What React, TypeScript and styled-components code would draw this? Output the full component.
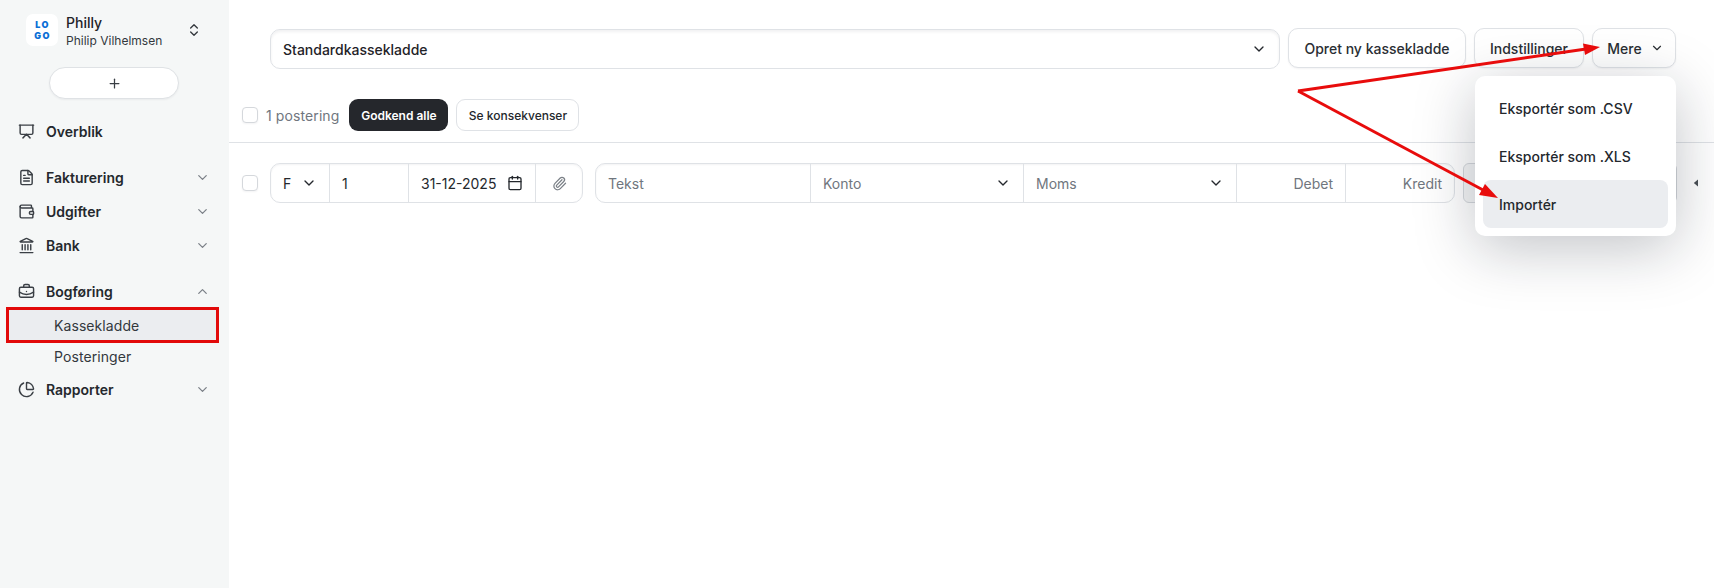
import React from "react";
import styled, { createGlobalStyle } from "styled-components";
import {
  BriefcaseBusiness,
  Calendar,
  ChartPie,
  ChevronDown,
  ChevronUp,
  ChevronsUpDown,
  FileText,
  Landmark,
  Paperclip,
  Plus,
  Presentation,
  Wallet,
} from "lucide-react";

const Global = createGlobalStyle`
  html, body { margin: 0; padding: 0; background: #fff; }
  body { font-family: Inter, "Liberation Sans", sans-serif; color: #1f2328; }
  * { box-sizing: border-box; }
`;

const Page = styled.div`
  position: relative;
  display: flex;
  width: 1714px;
  height: 588px;
  overflow: hidden;
`;

const Sidebar = styled.aside`
  width: 229px;
  flex: none;
  background: #f5f7f7;
  display: flex;
  flex-direction: column;
`;

const Brand = styled.div`
  display: flex;
  align-items: center;
  margin: 14px 0 0 26px;
  height: 32px;
`;

const LogoTile = styled.div`
  width: 32px;
  height: 32px;
  border-radius: 7px;
  background: #fff;
  display: flex;
  flex-direction: column;
  align-items: center;
  justify-content: center;
  color: #0b6fd6;
  font-size: 9px;
  font-weight: 900;
  line-height: 11px;
  letter-spacing: 1.4px;
  padding-left: 1px;
`;

const BrandText = styled.div`
  margin-left: 8px;
  padding-top: 2px;
  width: 120px;
  display: flex;
  flex-direction: column;
`;

const BrandName = styled.div`
  font-size: 14px;
  line-height: 18px;
  font-weight: 500;
`;

const BrandUser = styled.div`
  font-size: 12px;
  line-height: 17px;
  color: #33383d;
`;

const BrandToggle = styled.div`
  display: flex;
  color: #33383d;
`;

const AddButton = styled.div`
  margin: 21px 0 0 49px;
  width: 130px;
  height: 32px;
  border-radius: 16px;
  border: 1px solid #dfe2e5;
  background: #fff;
  display: flex;
  align-items: center;
  justify-content: center;
  color: #3a3f45;
  box-shadow: 0 1px 2px rgba(16, 24, 40, 0.05);
`;

const NavGroup = styled.nav<{ $top: number }>`
  margin-top: ${(p) => p.$top}px;
  display: flex;
  flex-direction: column;
`;

const NavRow = styled.div`
  height: 34px;
  padding: 0 18px 0 18px;
  display: flex;
  align-items: center;
  font-size: 14px;
  font-weight: 600;
  color: #24282d;
  svg.lead { width: 17px; height: 17px; color: #3a3f45; margin-right: 11px; flex: none; }
  svg.tail { width: 15px; height: 15px; color: #7b8087; margin-left: auto; margin-right: 1px; }
`;

const SubRow = styled.div<{ $active?: boolean }>`
  margin: ${(p) => (p.$active ? "2px 13px 1px 9px" : "0 13px 0 9px")};
  height: ${(p) => (p.$active ? "30px" : "31px")};
  padding-left: 45px;
  display: flex;
  align-items: center;
  font-size: 14px;
  letter-spacing: 0.08px;
  color: #33383d;
  background: ${(p) => (p.$active ? "#ebedf0" : "transparent")};
  outline: ${(p) => (p.$active ? "3px solid #e20a0a" : "none")};
`;

const Main = styled.main`
  flex: 1;
  min-width: 0;
  display: flex;
  flex-direction: column;
`;

const TopBar = styled.div`
  display: flex;
  align-items: flex-start;
  padding: 28px 38px 0 41px;
  gap: 8px;
`;

const JournalSelect = styled.div`
  flex: 1;
  height: 40px;
  margin-top: 1px;
  border: 1px solid #dfe2e6;
  border-radius: 10px;
  padding: 0 12px;
  display: flex;
  align-items: center;
  justify-content: space-between;
  font-size: 14px;
  font-weight: 500;
  box-shadow: inset 0 2px 3px rgba(16, 24, 40, 0.06);
  svg { width: 16px; height: 16px; color: #24282d; }
`;

const Button = styled.div<{ $w: number; $iconed?: boolean }>`
  width: ${(p) => p.$w}px;
  flex: none;
  height: 40px;
  padding-left: ${(p) => (p.$iconed ? "3px" : "0")};
  border: 1px solid #dfe2e6;
  border-radius: 10px;
  background: #fff;
  display: flex;
  align-items: center;
  justify-content: center;
  gap: 8px;
  font-size: 14px;
  font-weight: 500;
  color: #2a2e33;
  box-shadow: 0 1px 2px rgba(16, 24, 40, 0.05);
  svg { width: 14px; height: 14px; }
`;

const ActionRow = styled.div`
  display: flex;
  align-items: center;
  height: 74px;
  padding: 19px 0 0 13px;
  border-bottom: 1px solid #dfe2e6;
`;

const Check = styled.span`
  width: 16px;
  height: 16px;
  flex: none;
  border: 1px solid #d5d8dc;
  border-radius: 4px;
  background: #fff;
  box-shadow: 0 1px 2px rgba(16, 24, 40, 0.05);
`;

const CountLabel = styled.span`
  margin: 0 2px 0 8px;
  font-size: 14px;
  letter-spacing: 0.1px;
  color: #70767e;
`;

const DarkButton = styled.div`
  margin-left: 8px;
  width: 99px;
  height: 32px;
  border-radius: 9px;
  background: #25272c;
  color: #fff;
  font-size: 12px;
  font-weight: 600;
  display: flex;
  align-items: center;
  justify-content: center;
`;

const LightButton = styled.div`
  margin-left: 8px;
  width: 123px;
  height: 32px;
  border-radius: 9px;
  background: #fff;
  border: 1px solid #dfe2e6;
  color: #24282d;
  font-size: 12px;
  font-weight: 500;
  display: flex;
  align-items: center;
  justify-content: center;
`;

const EntryRow = styled.div`
  display: flex;
  align-items: center;
  padding: 20px 0 0 13px;
`;

const FieldGroup = styled.div<{ $ml: number }>`
  margin-left: ${(p) => p.$ml}px;
  height: 40px;
  display: flex;
  flex: none;
  border: 1px solid #dfe2e6;
  border-radius: 10px;
  overflow: hidden;
  box-shadow: inset 0 1px 2px rgba(16, 24, 40, 0.05);
`;

const Field = styled.div<{ $w: number; $right?: boolean; $muted?: boolean; $center?: boolean }>`
  width: ${(p) => p.$w}px;
  flex: none;
  height: 100%;
  padding: 0 12px;
  display: flex;
  align-items: center;
  justify-content: ${(p) => (p.$right ? "flex-end" : p.$center ? "center" : "space-between")};
  font-size: 14px;
  color: ${(p) => (p.$muted ? "#70767e" : "#24282d")};
  border-right: 1px solid #dfe2e6;
  &:last-child { border-right: none; }
  svg { width: 16px; height: 16px; flex: none; color: #24282d; }
`;

const ClipIcon = styled(Paperclip)`
  && { color: #7b8087; width: 15px; height: 15px; }
`;

const GhostBox = styled.div`
  margin-left: 8px;
  width: 214px;
  height: 40px;
  flex: none;
  border: 1px solid #d5d8dc;
  border-radius: 6px;
  background: #f5f6f7;
`;

const Caret = styled.svg`
  margin-left: 16px;
  flex: none;
`;

const Menu = styled.div`
  position: absolute;
  left: 1475px;
  top: 76px;
  width: 201px;
  height: 160px;
  padding: 8px;
  background: #fff;
  border-radius: 10px;
  box-shadow: 0 12px 60px rgba(16, 24, 40, 0.26);
  display: flex;
  flex-direction: column;
`;

const MenuItem = styled.div<{ $active?: boolean }>`
  height: 48px;
  flex: none;
  padding-left: 16px;
  display: flex;
  align-items: center;
  font-size: 14px;
  font-weight: 500;
  color: #24282d;
  border-radius: 8px;
  background: ${(p) => (p.$active ? "#ebedf0" : "transparent")};
`;

const Arrows = styled.svg`
  position: absolute;
  inset: 0;
  pointer-events: none;
`;

export default function App() {
  return (
    <Page>
      <Global />
      <Sidebar>
        <Brand>
          <LogoTile>
            <span>LO</span>
            <span>GO</span>
          </LogoTile>
          <BrandText>
            <BrandName>Philly</BrandName>
            <BrandUser>Philip Vilhelmsen</BrandUser>
          </BrandText>
          <BrandToggle>
            <ChevronsUpDown size={16} />
          </BrandToggle>
        </Brand>
        <AddButton>
          <Plus size={15} />
        </AddButton>
        <NavGroup $top={15}>
          <NavRow>
            <Presentation className="lead" />
            Overblik
          </NavRow>
        </NavGroup>
        <NavGroup $top={12}>
          <NavRow>
            <FileText className="lead" />
            Fakturering
            <ChevronDown className="tail" />
          </NavRow>
          <NavRow>
            <Wallet className="lead" />
            Udgifter
            <ChevronDown className="tail" />
          </NavRow>
          <NavRow>
            <Landmark className="lead" />
            Bank
            <ChevronDown className="tail" />
          </NavRow>
        </NavGroup>
        <NavGroup $top={12}>
          <NavRow>
            <BriefcaseBusiness className="lead" />
            Bogføring
            <ChevronUp className="tail" />
          </NavRow>
          <SubRow $active>Kassekladde</SubRow>
          <SubRow>Posteringer</SubRow>
          <NavRow>
            <ChartPie className="lead" />
            Rapporter
            <ChevronDown className="tail" />
          </NavRow>
        </NavGroup>
      </Sidebar>
      <Main>
        <TopBar>
          <JournalSelect>
            Standardkassekladde
            <ChevronDown />
          </JournalSelect>
          <Button $w={178}>Opret ny kassekladde</Button>
          <Button $w={110}>Indstillinger</Button>
          <Button $w={84} $iconed>
            Mere
            <ChevronDown />
          </Button>
        </TopBar>
        <ActionRow>
          <Check />
          <CountLabel>1 postering</CountLabel>
          <DarkButton>Godkend alle</DarkButton>
          <LightButton>Se konsekvenser</LightButton>
        </ActionRow>
        <EntryRow>
          <Check />
          <FieldGroup $ml={12}>
            <Field $w={59}>
              F
              <ChevronDown />
            </Field>
            <Field $w={79}>1</Field>
            <Field $w={127}>
              31-12-2025
              <Calendar />
            </Field>
            <Field $w={46} $center>
              <ClipIcon />
            </Field>
          </FieldGroup>
          <FieldGroup $ml={12}>
            <Field $w={215} $muted>Tekst</Field>
            <Field $w={213} $muted>
              Konto
              <ChevronDown />
            </Field>
            <Field $w={213} $muted>
              Moms
              <ChevronDown />
            </Field>
            <Field $w={109} $right $muted>Debet</Field>
            <Field $w={108} $right $muted>Kredit</Field>
          </FieldGroup>
          <GhostBox />
          <Caret width="6" height="8" viewBox="0 0 6 8">
            <path d="M5 0.5 L0.8 4 L5 7.5 Z" fill="#4a4f55" />
          </Caret>
        </EntryRow>
      </Main>
      <Menu>
        <MenuItem>Eksportér som .CSV</MenuItem>
        <MenuItem>Eksportér som .XLS</MenuItem>
        <MenuItem $active>Importér</MenuItem>
      </Menu>
      <Arrows width="1714" height="588" viewBox="0 0 1714 588">
        <path d="M1298 91 L1586 49" stroke="#e80c0c" strokeWidth="3" fill="none" />
        <path d="M1600 47 L1583 43.4 L1585 55 Z" fill="#e80c0c" />
        <path d="M1298 91 L1484 190.5" stroke="#e80c0c" strokeWidth="3" fill="none" />
        <path d="M1498 198 L1485 184 L1479 195 Z" fill="#e80c0c" />
      </Arrows>
    </Page>
  );
}
